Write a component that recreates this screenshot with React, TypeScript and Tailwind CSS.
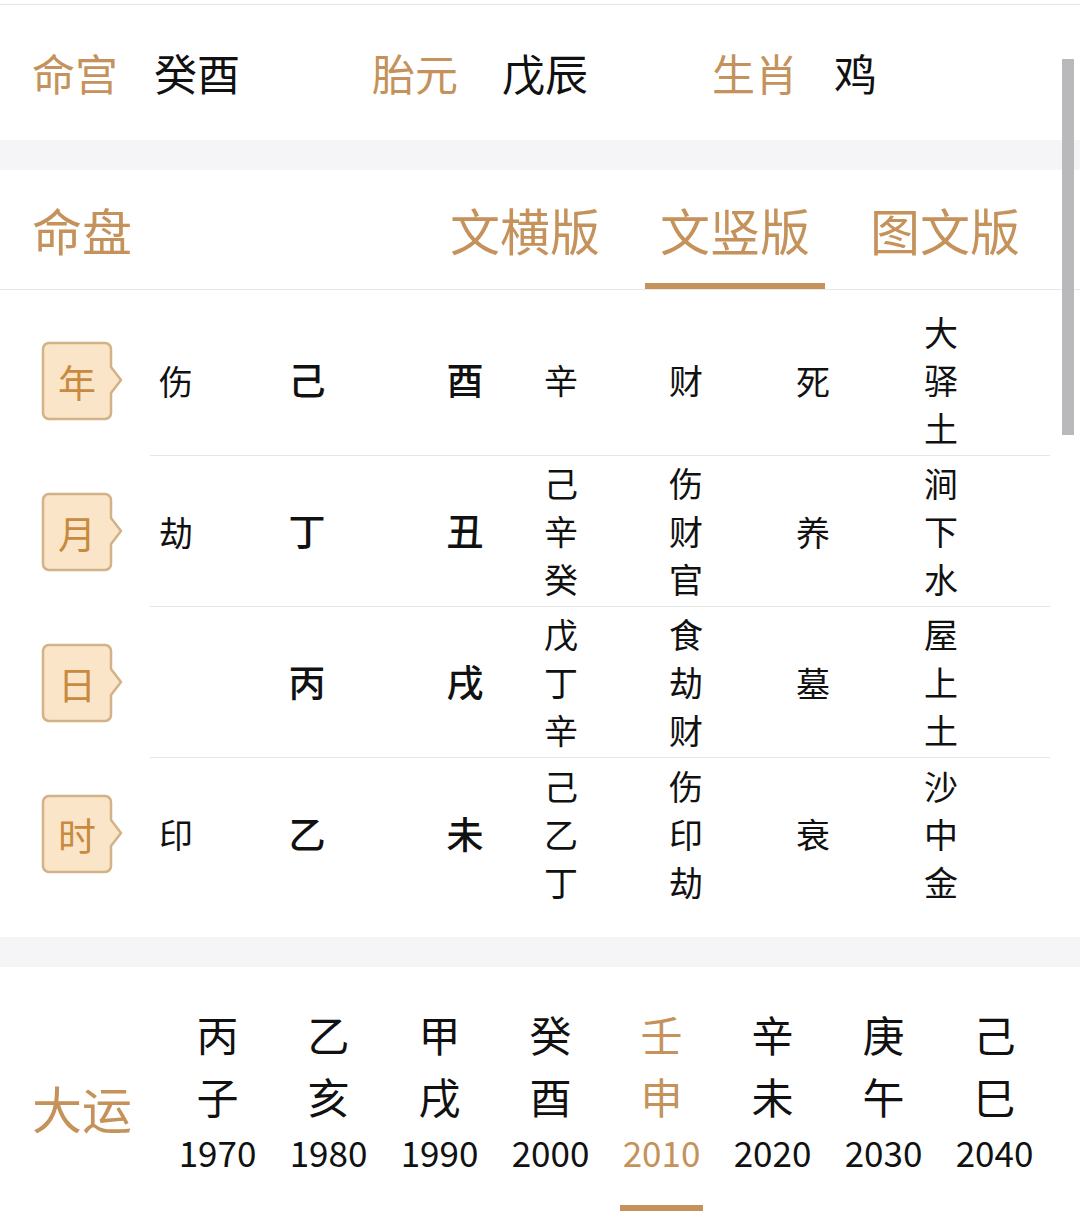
import React from "react";

const pillars = [
  { label: "年", shen: "伤", gan: "己", zhi: "酉", cang: ["辛"], cangShen: ["财"], state: "死", nayin: ["大", "驿", "土"] },
  { label: "月", shen: "劫", gan: "丁", zhi: "丑", cang: ["己", "辛", "癸"], cangShen: ["伤", "财", "官"], state: "养", nayin: ["涧", "下", "水"] },
  { label: "日", shen: "", gan: "丙", zhi: "戌", cang: ["戊", "丁", "辛"], cangShen: ["食", "劫", "财"], state: "墓", nayin: ["屋", "上", "土"] },
  { label: "时", shen: "印", gan: "乙", zhi: "未", cang: ["己", "乙", "丁"], cangShen: ["伤", "印", "劫"], state: "衰", nayin: ["沙", "中", "金"] },
];

const dayun = [
  { gan: "丙", zhi: "子", year: "1970" },
  { gan: "乙", zhi: "亥", year: "1980" },
  { gan: "甲", zhi: "戌", year: "1990" },
  { gan: "癸", zhi: "酉", year: "2000" },
  { gan: "壬", zhi: "申", year: "2010", active: true },
  { gan: "辛", zhi: "未", year: "2020" },
  { gan: "庚", zhi: "午", year: "2030" },
  { gan: "己", zhi: "巳", year: "2040" },
];

function PillarBadge({ ch }: { ch: string }) {
  return (
    <div className="relative h-[80px] w-[84px]">
      <svg className="absolute inset-0" width="84" height="80" viewBox="0 0 84 80">
        <path
          d="M8 2 H64 a6 6 0 0 1 6 6 V26 L80 39 L70 52 V72 a6 6 0 0 1 -6 6 H8 a6 6 0 0 1 -6 -6 V8 a6 6 0 0 1 6 -6 Z"
          fill="#fbe5c8"
          stroke="#d2b286"
          strokeWidth="2.5"
          strokeLinejoin="round"
        />
      </svg>
      <span className="relative flex h-full w-[72px] items-center justify-center text-[38px] text-[#c78a3e]">
        {ch}
      </span>
    </div>
  );
}

function Stack({ items }: { items: string[] }) {
  return (
    <div className="flex flex-col items-center leading-[48px]">
      {items.map((c, i) => (
        <span key={i}>{c}</span>
      ))}
    </div>
  );
}

export default function App() {
  return (
    <div className="relative w-[1080px] bg-white font-['Noto_Sans_CJK_SC','Noto_Sans',sans-serif] text-[#111]">
      {/* scrollbar thumb */}
      <div className="absolute right-[6px] top-[59px] h-[376px] w-[12px] bg-[#b9b9bc]" />

      {/* 命宫 / 胎元 / 生肖 */}
      <div className="pt-[4px]">
        <div className="grid h-[136px] grid-cols-[340px_340px_340px] items-center border-t border-[#e6e6e6] pl-[32px] text-[43px]">
          <div className="flex items-center gap-[36px]">
            <span className="text-[#c4925a]">命宫</span>
            <span>癸酉</span>
          </div>
          <div className="flex items-center gap-[44px]">
            <span className="text-[#c4925a]">胎元</span>
            <span>戊辰</span>
          </div>
          <div className="flex items-center gap-[36px]">
            <span className="text-[#c4925a]">生肖</span>
            <span>鸡</span>
          </div>
        </div>
      </div>

      <div className="h-[30px] bg-[#f5f5f7]" />

      {/* 命盘 header */}
      <div className="flex h-[120px] items-stretch border-b border-[#e8e8e8] pl-[32px] pr-[45px] text-[50px] text-[#c4925a]">
        <div className="flex flex-1 items-center">命盘</div>
        <div className="flex gap-[30px]">
          {["文横版", "文竖版", "图文版"].map((t) => (
            <div key={t} className="relative flex items-center px-[15px]">
              {t}
              {t === "文竖版" && <div className="absolute bottom-0 left-0 right-0 h-[6px] bg-[#c4925a]" />}
            </div>
          ))}
        </div>
      </div>

      {/* 四柱 */}
      <div className="pb-[28px] pt-[15px] text-[34px]">
        {pillars.map((p, i) => (
          <div key={p.label} className="flex h-[151px] items-stretch">
            <div className="flex w-[150px] items-center pl-[41px]">
              <PillarBadge ch={p.label} />
            </div>
            <div
              className={`mr-[30px] grid flex-1 grid-cols-[52px_210px_106px_86px_164px_90px_166px] items-center text-center ${
                i < pillars.length - 1 ? "border-b border-[#e6e6e6]" : ""
              }`}
            >
              <div>{p.shen}</div>
              <div className="text-[37px] font-medium">{p.gan}</div>
              <div className="text-[37px] font-medium">{p.zhi}</div>
              <Stack items={p.cang} />
              <Stack items={p.cangShen} />
              <div>{p.state}</div>
              <Stack items={p.nayin} />
            </div>
          </div>
        ))}
      </div>

      <div className="h-[30px] bg-[#f5f5f7]" />

      {/* 大运 */}
      <div className="flex pl-[32px] pt-[36px]">
        <div className="flex w-[130px] items-center text-[50px] text-[#c4925a]">大运</div>
        <div className="grid w-[888px] grid-cols-8">
          {dayun.map((d) => (
            <div
              key={d.year}
              className={`flex flex-col items-center ${d.active ? "text-[#c4925a]" : "text-[#111]"}`}
            >
              <span className="text-[42px] leading-[62px]">{d.gan}</span>
              <span className="text-[42px] leading-[62px]">{d.zhi}</span>
              <span className="text-[35px] leading-[50px]">{d.year}</span>
              <div className={`mt-[28px] h-[6px] w-[83px] ${d.active ? "bg-[#c4925a]" : "bg-transparent"}`} />
            </div>
          ))}
        </div>
      </div>
    </div>
  );
}
